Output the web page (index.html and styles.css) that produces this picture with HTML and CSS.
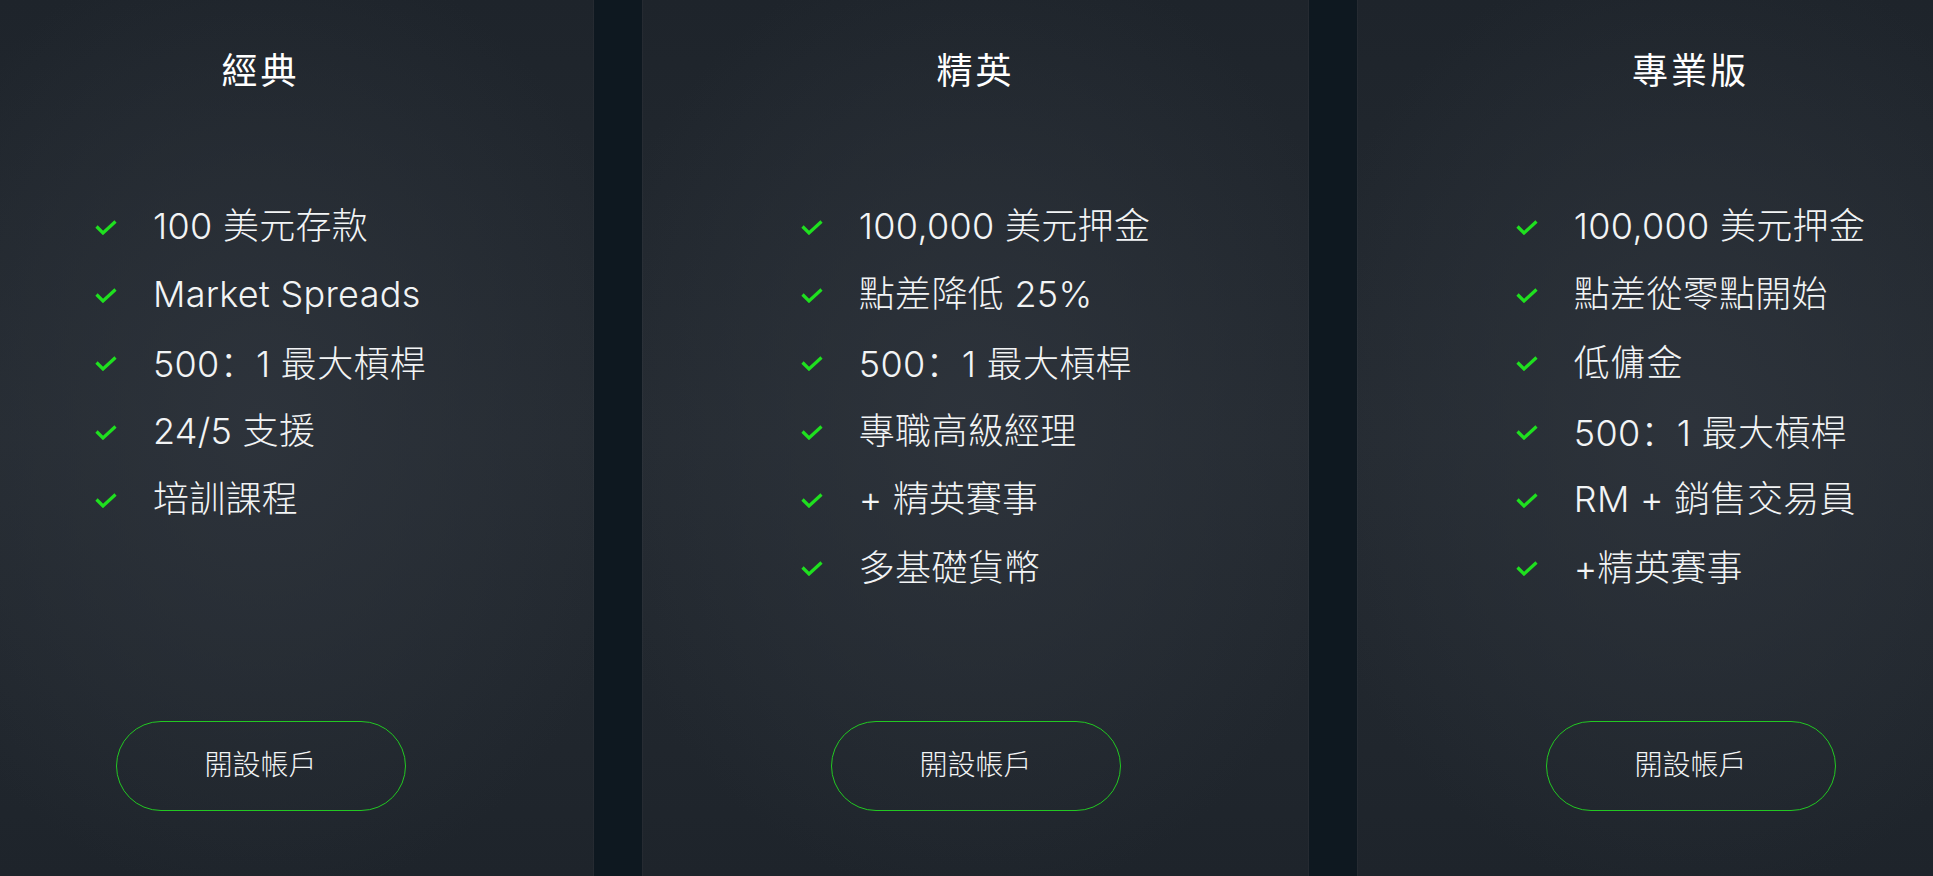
FILE: index.html
```html
<!DOCTYPE html>
<html lang="zh-Hant">
<head>
<meta charset="utf-8">
<title>帳戶類型</title>
<link rel="stylesheet" href="styles.css">
</head>
<body>
<div class="plans">
  <section class="card">
    <h2 class="title">經典</h2>
    <ul class="features">
      <li><svg class="check" viewBox="0 0 22 15"><path d="M1.5 6.5 L8 13 L20.5 1.5"/></svg><span class="label">100 美元存款</span></li>
      <li><svg class="check" viewBox="0 0 22 15"><path d="M1.5 6.5 L8 13 L20.5 1.5"/></svg><span class="label">Market Spreads</span></li>
      <li><svg class="check" viewBox="0 0 22 15"><path d="M1.5 6.5 L8 13 L20.5 1.5"/></svg><span class="label">500<span class="colon" lang="zh-Hans">：</span>1 最大槓桿</span></li>
      <li><svg class="check" viewBox="0 0 22 15"><path d="M1.5 6.5 L8 13 L20.5 1.5"/></svg><span class="label">24/5 支援</span></li>
      <li><svg class="check" viewBox="0 0 22 15"><path d="M1.5 6.5 L8 13 L20.5 1.5"/></svg><span class="label">培訓課程</span></li>
    </ul>
    <a class="btn" href="#">開設帳戶</a>
  </section>
  <section class="card">
    <h2 class="title">精英</h2>
    <ul class="features">
      <li><svg class="check" viewBox="0 0 22 15"><path d="M1.5 6.5 L8 13 L20.5 1.5"/></svg><span class="label">100,000 美元押金</span></li>
      <li><svg class="check" viewBox="0 0 22 15"><path d="M1.5 6.5 L8 13 L20.5 1.5"/></svg><span class="label">點差降低 25%</span></li>
      <li><svg class="check" viewBox="0 0 22 15"><path d="M1.5 6.5 L8 13 L20.5 1.5"/></svg><span class="label">500<span class="colon" lang="zh-Hans">：</span>1 最大槓桿</span></li>
      <li><svg class="check" viewBox="0 0 22 15"><path d="M1.5 6.5 L8 13 L20.5 1.5"/></svg><span class="label">專職高級經理</span></li>
      <li><svg class="check" viewBox="0 0 22 15"><path d="M1.5 6.5 L8 13 L20.5 1.5"/></svg><span class="label">+ 精英賽事</span></li>
      <li><svg class="check" viewBox="0 0 22 15"><path d="M1.5 6.5 L8 13 L20.5 1.5"/></svg><span class="label">多基礎貨幣</span></li>
    </ul>
    <a class="btn" href="#">開設帳戶</a>
  </section>
  <section class="card">
    <h2 class="title">專業版</h2>
    <ul class="features">
      <li><svg class="check" viewBox="0 0 22 15"><path d="M1.5 6.5 L8 13 L20.5 1.5"/></svg><span class="label">100,000 美元押金</span></li>
      <li><svg class="check" viewBox="0 0 22 15"><path d="M1.5 6.5 L8 13 L20.5 1.5"/></svg><span class="label">點差從零點開始</span></li>
      <li><svg class="check" viewBox="0 0 22 15"><path d="M1.5 6.5 L8 13 L20.5 1.5"/></svg><span class="label">低傭金</span></li>
      <li><svg class="check" viewBox="0 0 22 15"><path d="M1.5 6.5 L8 13 L20.5 1.5"/></svg><span class="label">500<span class="colon" lang="zh-Hans">：</span>1 最大槓桿</span></li>
      <li><svg class="check" viewBox="0 0 22 15"><path d="M1.5 6.5 L8 13 L20.5 1.5"/></svg><span class="label">RM + 銷售交易員</span></li>
      <li><svg class="check" viewBox="0 0 22 15"><path d="M1.5 6.5 L8 13 L20.5 1.5"/></svg><span class="label">+精英賽事</span></li>
    </ul>
    <a class="btn" href="#">開設帳戶</a>
  </section>
</div>
</body>
</html>
```

FILE: styles.css
```css
html, body {
  margin: 0;
  padding: 0;
  height: 100%;
  overflow: hidden;
  background: #0e1820;
}

body {
  font-family: "Inter", "Noto Sans CJK TC", sans-serif;
  color: #f2f4f5;
}

.plans {
  display: flex;
  gap: 48px;
  margin-left: -73px;
  height: 876px;
}

.card {
  flex: 0 0 667px;
  height: 876px;
  box-sizing: border-box;
  display: flex;
  flex-direction: column;
  align-items: center;
  padding: 46px 0 65px;
  background:
    radial-gradient(ellipse 60% 55% at 50% 48%, rgba(46, 52, 60, 0.9) 0%, rgba(46, 52, 60, 0) 100%),
    linear-gradient(180deg, #1e242b 0%, #252b32 50%, #1e242b 100%);
  box-shadow: inset 1px 0 0 rgba(255, 255, 255, 0.03), inset -1px 0 0 rgba(255, 255, 255, 0.03);
}

.title {
  margin: 0;
  font-family: "Noto Sans CJK TC", sans-serif;
  font-size: 36px;
  line-height: 44px;
  font-weight: 400;
  letter-spacing: 3px;
  color: #ffffff;
}

.features {
  list-style: none;
  margin: 102px 0 0;
  padding: 0;
}

.features li {
  display: flex;
  align-items: center;
  height: 68.3px;
  font-size: 36px;
  font-weight: 300;
  letter-spacing: 0.3px;
  white-space: nowrap;
}

.label {
  line-height: 46px;
}

.colon {
  font-family: "Noto Sans CJK SC", sans-serif;
}

.check {
  width: 22px;
  height: 15px;
  flex: 0 0 22px;
  margin-right: 36px;
  margin-top: 2px;
  fill: none;
  stroke: #1fe01f;
  stroke-width: 3.2;
  stroke-linecap: butt;
  stroke-linejoin: miter;
}

.btn {
  margin-top: auto;
  width: 290px;
  height: 90px;
  box-sizing: border-box;
  border: 1.5px solid #22c822;
  border-radius: 45px;
  display: flex;
  align-items: center;
  justify-content: center;
  font-family: "Noto Sans CJK TC", sans-serif;
  font-size: 28px;
  font-weight: 300;
  color: #f2f4f5;
  text-decoration: none;
  padding-bottom: 6px;
}
```
